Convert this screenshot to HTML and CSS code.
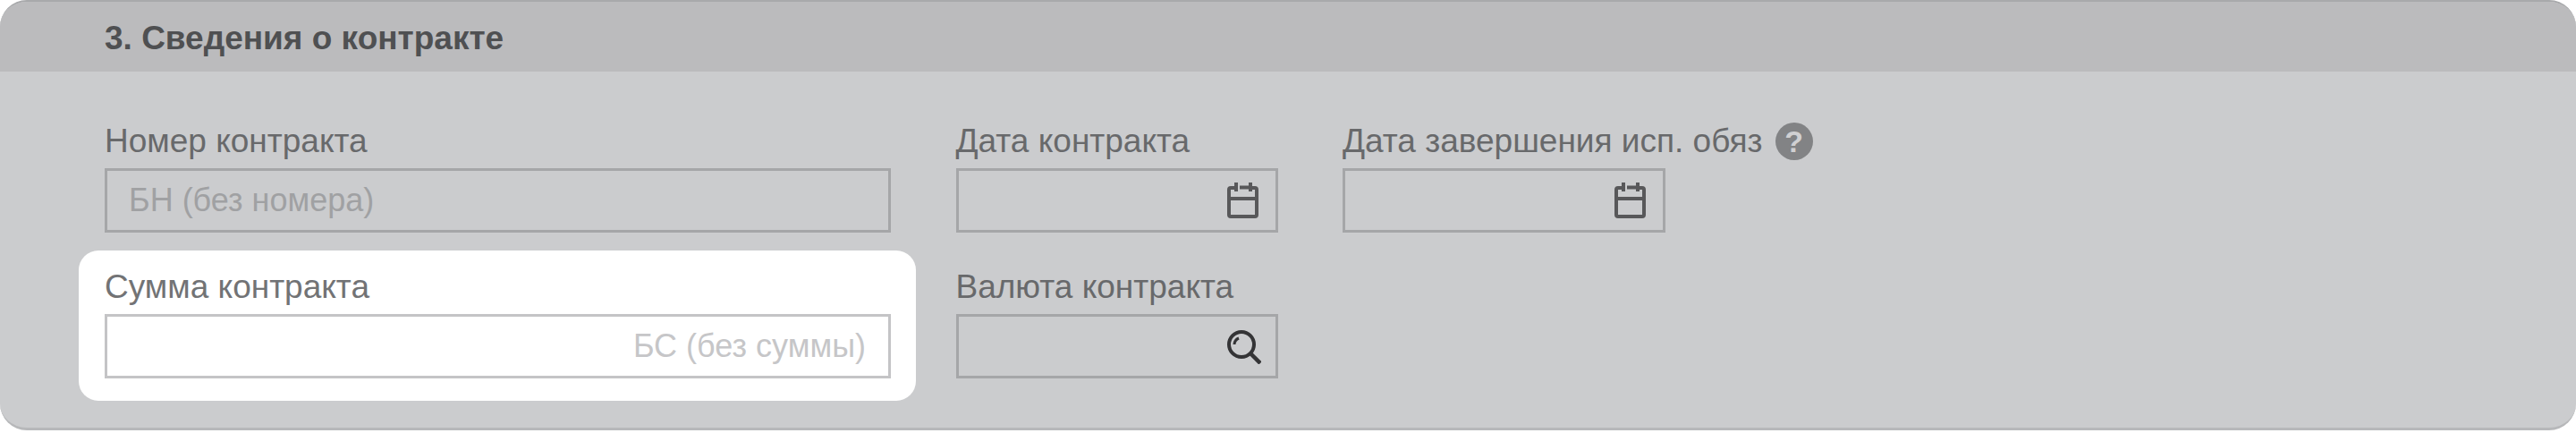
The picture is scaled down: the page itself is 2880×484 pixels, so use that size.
FILE: index.html
```html
<!DOCTYPE html>
<html lang="ru">
<head>
<meta charset="utf-8">
<title>Сведения о контракте</title>
<link rel="stylesheet" href="styles.css">
</head>
<body>
<section class="panel">
  <header class="panel-head"><h2 class="panel-title">3. Сведения о контракте</h2></header>
  <div class="panel-body">
    <div class="field">
      <div class="label">Номер контракта</div>
      <div class="input"><span class="ph">БН (без номера)</span></div>
    </div>
    <div class="field">
      <div class="label">Дата контракта</div>
      <div class="input input-end">
        <svg class="icon" width="36" height="40" viewBox="0 0 36 40" fill="none" stroke="#58585a" stroke-width="4"><path d="M9 6H4a2 2 0 0 0-2 2v28a2 2 0 0 0 2 2h27a2 2 0 0 0 2-2V8a2 2 0 0 0-2-2h-5M14 5.500h10M2 18h31M10 0v10M26 0v10"/></svg>
      </div>
    </div>
    <div class="field">
      <div class="label label-help">Дата завершения исп. обяз <span class="help">?</span></div>
      <div class="input input-end">
        <svg class="icon" width="36" height="40" viewBox="0 0 36 40" fill="none" stroke="#58585a" stroke-width="4"><path d="M9 6H4a2 2 0 0 0-2 2v28a2 2 0 0 0 2 2h27a2 2 0 0 0 2-2V8a2 2 0 0 0-2-2h-5M14 5.500h10M2 18h31M10 0v10M26 0v10"/></svg>
      </div>
    </div>
    <div class="field field-active">
      <div class="label">Сумма контракта</div>
      <div class="input input-end"><span class="ph">БС (без суммы)</span></div>
    </div>
    <div class="field">
      <div class="label">Валюта контракта</div>
      <div class="input input-search">
        <svg class="icon" width="38" height="40" viewBox="0 0 38 40" fill="none" stroke="#343436" stroke-width="4"><circle cx="16" cy="18" r="14"/><path d="M26 28l11 11" stroke-width="4.500"/><path d="M8 18a8 8 0 0 1 5-7" stroke-width="3"/></svg>
      </div>
    </div>
  </div>
</section>
</body>
</html>
```
FILE: styles.css
```css
* { box-sizing: border-box; }
html, body { margin: 0; padding: 0; background: #fff; }
body { height: 484px; overflow: hidden; font-family: "Liberation Sans", Arial, sans-serif; }
.panel {
  height: 481px;
  background: #cbccce;
  border-top: 2px solid #a8a9ab;
  border-bottom: 3px solid #b7b8ba;
  border-radius: 30px;
  overflow: hidden;
}
.panel-head {
  height: 78px;
  background: #bbbbbd;
  padding: 3px 0 0 117px;
  display: flex;
  align-items: center;
}
.panel-title { margin: 0; font-size: 37px; font-weight: 700; color: #4f5052; }
.panel-body {
  display: grid;
  grid-template-columns: 879px 360px 361px;
  column-gap: 72.500px;
  row-gap: 36px;
  padding: 53px 0 0 117px;
  align-content: start;
}
.field { display: flex; flex-direction: column; gap: 5px; }
.field-active {
  background: #fff;
  margin: -16px -28px -25px -29px;
  padding: 16px 28px 25px 29px;
  border-radius: 22px;
}
.label { height: 50px; display: flex; align-items: center; font-size: 37px; color: #68696b; white-space: nowrap; }
.label-help { gap: 14px; }
.help {
  flex: none;
  width: 42px; height: 42px; border-radius: 50%;
  background: #828385; color: #d0d0d2;
  font-size: 34px; font-weight: 700;
  display: flex; align-items: center; justify-content: center;
}
.input {
  height: 72px;
  border: 3px solid #a5a6a8;
  display: flex;
  align-items: center;
  padding: 0 24px;
}
.input-end { justify-content: flex-end; padding-right: 18px; }
.input-search { justify-content: flex-end; padding-right: 16px; }
.ph { font-size: 36px; color: #a0a1a3; }
.field-active .label { color: #727375; }
.field-active .input { border-color: #c4c4c6; padding-right: 25px; }
.field-active .ph { color: #c6c6c8; }
.icon { display: block; }
```
